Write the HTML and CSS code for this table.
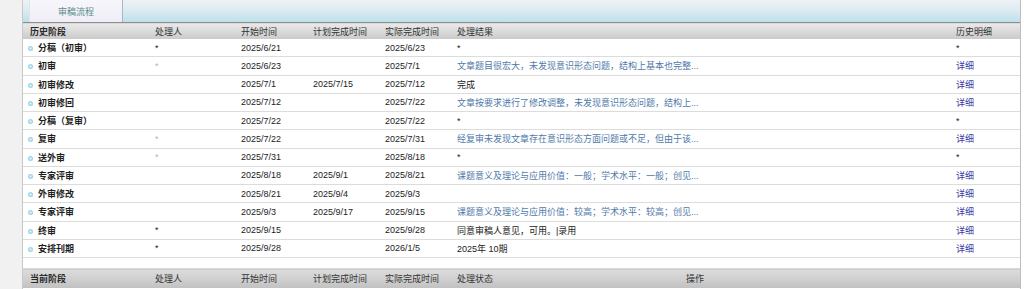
FILE: index.html
```html
<!DOCTYPE html>
<html lang="zh-CN">
<head>
<meta charset="utf-8">
<title>审稿流程</title>
<link rel="stylesheet" href="styles.css">
</head>
<body>
<div class="page">
  <div class="side"></div>
  <div class="main">
    <div class="tabbar">
      <div class="tab">审稿流程</div>
    </div>
    <table class="grid">
      <colgroup>
        <col class="c-stage"><col class="c-user"><col class="c-date"><col class="c-date"><col class="c-date"><col class="c-result"><col class="c-detail">
      </colgroup>
      <thead>
        <tr class="head">
          <th class="strong">历史阶段</th><th>处理人</th><th>开始时间</th><th>计划完成时间</th><th>实际完成时间</th><th>处理结果</th><th>历史明细</th>
        </tr>
      </thead>
      <tbody>
        <tr><td class="stage"><span class="dot"></span>分稿（初审）</td><td>*</td><td>2025/6/21</td><td></td><td>2025/6/23</td><td>*</td><td>*</td></tr>
        <tr><td class="stage"><span class="dot"></span>初审</td><td class="faint">*</td><td>2025/6/23</td><td></td><td>2025/7/1</td><td class="link">文章题目很宏大，未发现意识形态问题，结构上基本也完整...</td><td class="detail">详细</td></tr>
        <tr><td class="stage"><span class="dot"></span>初审修改</td><td></td><td>2025/7/1</td><td>2025/7/15</td><td>2025/7/12</td><td>完成</td><td class="detail">详细</td></tr>
        <tr><td class="stage"><span class="dot"></span>初审修回</td><td></td><td>2025/7/12</td><td></td><td>2025/7/22</td><td class="link">文章按要求进行了修改调整，未发现意识形态问题，结构上...</td><td class="detail">详细</td></tr>
        <tr><td class="stage"><span class="dot"></span>分稿（复审）</td><td></td><td>2025/7/22</td><td></td><td>2025/7/22</td><td>*</td><td>*</td></tr>
        <tr><td class="stage"><span class="dot"></span>复审</td><td class="faint">*</td><td>2025/7/22</td><td></td><td>2025/7/31</td><td class="link">经复审未发现文章存在意识形态方面问题或不足，但由于该...</td><td class="detail">详细</td></tr>
        <tr><td class="stage"><span class="dot"></span>送外审</td><td class="faint">*</td><td>2025/7/31</td><td></td><td>2025/8/18</td><td>*</td><td>*</td></tr>
        <tr><td class="stage"><span class="dot"></span>专家评审</td><td></td><td>2025/8/18</td><td>2025/9/1</td><td>2025/8/21</td><td class="link">课题意义及理论与应用价值：一般；学术水平：一般；创见...</td><td class="detail">详细</td></tr>
        <tr><td class="stage"><span class="dot"></span>外审修改</td><td></td><td>2025/8/21</td><td>2025/9/4</td><td>2025/9/3</td><td></td><td class="detail">详细</td></tr>
        <tr><td class="stage"><span class="dot"></span>专家评审</td><td></td><td>2025/9/3</td><td>2025/9/17</td><td>2025/9/15</td><td class="link">课题意义及理论与应用价值：较高；学术水平：较高；创见...</td><td class="detail">详细</td></tr>
        <tr><td class="stage"><span class="dot"></span>终审</td><td>*</td><td>2025/9/15</td><td></td><td>2025/9/28</td><td>同意审稿人意见，可用。|录用</td><td class="detail">详细</td></tr>
        <tr><td class="stage"><span class="dot"></span>安排刊期</td><td>*</td><td>2025/9/28</td><td></td><td>2026/1/5</td><td>2025年 10期</td><td class="detail">详细</td></tr>
      </tbody>
    </table>
    <div class="spacer"></div>
    <table class="grid current">
      <colgroup>
        <col class="c-stage"><col class="c-user"><col class="c-date"><col class="c-date"><col class="c-date"><col class="c-status"><col class="c-op">
      </colgroup>
      <thead>
        <tr class="head head2">
          <th class="strong">当前阶段</th><th>处理人</th><th>开始时间</th><th>计划完成时间</th><th>实际完成时间</th><th>处理状态</th><th>操作</th>
        </tr>
      </thead>
    </table>
  </div>
</div>
</body>
</html>
```

FILE: styles.css
```css
html, body {
  margin: 0;
  padding: 0;
  background: #ffffff;
}

body {
  font-family: "Liberation Sans", "Noto Sans CJK SC", sans-serif;
  font-size: 9px;
  color: #222222;
}

.page {
  display: flex;
  height: 289px;
}

.side {
  width: 22px;
  flex: none;
  background: #f1f1f1;
}

.main {
  width: 999px;
  flex: none;
  box-sizing: border-box;
  border-left: 1px solid #c9c9c9;
  border-right: 1px solid #bdbdbd;
  background: #ffffff;
}

.tabbar {
  height: 22px;
  display: flex;
  padding-left: 6px;
  background: linear-gradient(to bottom, #eef2f5 0%, #dbeaf0 50%, #bde1ec 100%);
}

.tab {
  width: 94px;
  display: flex;
  align-items: center;
  justify-content: center;
  box-sizing: border-box;
  border-right: 1px solid #a9b7c0;
  border-left: 1px solid #dfe3ea;
  background: linear-gradient(to bottom, #f7f6fb 0%, #efedf6 100%);
  color: #5a8c8c;
  font-size: 9px;
  padding-top: 1px;
}

.grid {
  width: 997px;
  table-layout: fixed;
  border-collapse: collapse;
  border-spacing: 0;
}

.c-stage { width: 124px; }
.c-user { width: 86px; }
.c-date { width: 72px; }
.c-result { width: 499px; }
.c-detail { width: 72px; }
.c-status { width: 229px; }
.c-op { width: 342px; }

.head th {
  height: 16px;
  padding: 0 0 0 8px;
  text-align: left;
  font-weight: normal;
  color: #333333;
  white-space: nowrap;
  border-top: 1px solid #8e8e8e;
  background: linear-gradient(to bottom, #e9e9e9 0%, #dadada 50%, #c9c9c9 100%);
}

.head th:first-child {
  padding-left: 7px;
}

.head th.strong {
  font-weight: bold;
  color: #2a2a2a;
}

.head2 th {
  height: 19px;
  border-top: 1px solid #d9d9d9;
  background: linear-gradient(to bottom, #dcdcdc 0%, #d0d0d0 50%, #c0c0c0 100%);
}

tbody td {
  height: 17.25px;
  padding: 0 0 0 8px;
  border-bottom: 1px solid #dcdcdc;
  white-space: nowrap;
  overflow: hidden;
  color: #222222;
}

tbody td.stage {
  padding-left: 5px;
  font-weight: bold;
  color: #1e1e1e;
}

.dot {
  display: inline-block;
  width: 5px;
  height: 5px;
  border-radius: 50%;
  margin-right: 5px;
  background: radial-gradient(circle at 50% 50%, #e6f5fb 0%, #a9d9ec 45%, #7cc3e0 100%);
}

td.faint {
  color: #b5b5b5;
}

td.link {
  color: #4f79a9;
}

td.detail {
  color: #3a3aa6;
}

.spacer {
  height: 10px;
}
```
